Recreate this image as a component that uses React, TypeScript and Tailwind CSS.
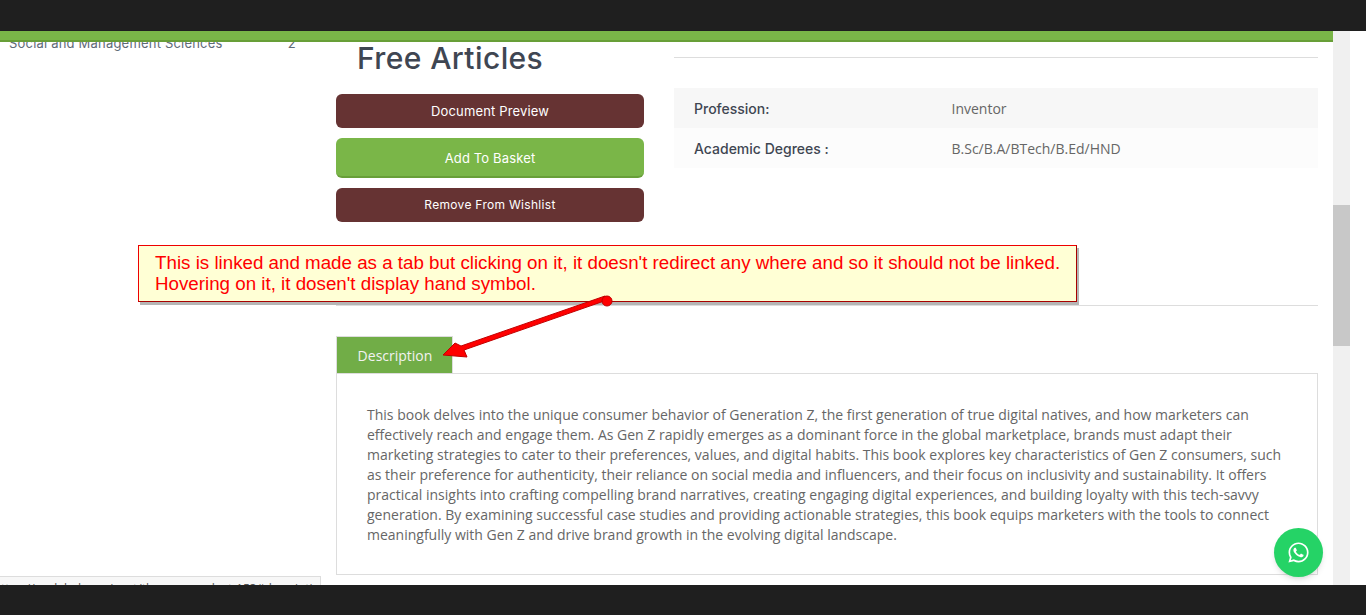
import { FaWhatsapp } from "react-icons/fa";

const sans = "font-['Open_Sans','Noto_Sans',sans-serif]";
const work = "font-['Inter','Liberation_Sans',sans-serif]";

export default function App() {
  return (
    <div className="relative flex h-[615px] w-[1366px] flex-col overflow-hidden bg-white">
      {/* browser chrome */}
      <div className="h-[31px] shrink-0 bg-[#1f1f1f]" />

      <div className="relative flex h-[554px] shrink-0">
        <div className="relative w-[1333px] shrink-0 overflow-hidden">
          <div className="relative z-10 h-[11px] border-b-2 border-[#689f38] bg-[#7ab648]" />

          <div className="flex">
            {/* sidebar */}
            <aside className="w-[336px] shrink-0 pl-[9px] pr-[40px]">
              <div className={`-mt-[9px] flex justify-between text-[13px] leading-[20px] tracking-[0.2px] text-[#5f6b78] ${work}`}>
                <span>Social and Management Sciences</span>
                <span>2</span>
              </div>
            </aside>

            {/* product */}
            <main className="w-[982px] shrink-0">
              <div className="flex gap-[30px]">
                <div className="w-[308px] shrink-0">
                  <h1 className={`pl-[21px] text-[30px] font-medium leading-[32px] tracking-[0.4px] text-[#3f4652] ${work}`}>Free Articles</h1>
                  <div className={`mt-[20px] flex flex-col gap-[10px] text-[13px] text-white ${work}`}>
                    <button className="h-[34px] rounded-[6px] bg-[#663333] pt-[2px] tracking-[0.15px]">Document Preview</button>
                    <button className="h-[40px] rounded-[6px] border-b-2 border-[#689f38] bg-[#7ab648] pt-[3px] tracking-[0.15px]">Add To Basket</button>
                    <button className="h-[34px] rounded-[6px] bg-[#663333] text-[12px] tracking-[0.3px]">Remove From Wishlist</button>
                  </div>
                </div>

                <div className="flex-1">
                  <div className="mt-[15px] border-t border-[#dddddd]" />
                  <div className={`mt-[30px] text-[14px] ${work}`}>
                    <div className="flex h-[40px] items-center bg-[#f7f7f7] pl-[20px]">
                      <span className="w-[257.5px] font-medium text-[#3f4652]">Profession:</span>
                      <span className={`text-[#666666] ${sans}`}>Inventor</span>
                    </div>
                    <div className="flex h-[40px] items-center bg-[#fcfcfc] pl-[20px]">
                      <span className="w-[257.5px] font-medium text-[#3f4652]">Academic Degrees :</span>
                      <span className={`text-[#666666] ${sans}`}>B.Sc/B.A/BTech/B.Ed/HND</span>
                    </div>
                  </div>
                </div>
              </div>

              <div className="mt-[83px] border-t border-[#dddddd]" />

              <div className={`mt-[30px] ${sans}`}>
                <div className="flex h-[37px] w-[117px] items-center justify-center border border-b-0 border-[#dddddd] bg-[#71ad47] pl-[1px] text-[14px] text-[#f2f2f2]">
                  Description
                </div>
                <div className="h-[202px] border border-[#dddddd] px-[30px] pt-[31px] text-[14px] leading-[20px] text-[#666666]">
                  This book delves into the unique consumer behavior of Generation Z, the first generation of true digital natives, and how marketers can effectively reach and engage them. As Gen Z rapidly emerges as a dominant force in the global marketplace, brands must adapt their marketing strategies to cater to their preferences, values, and digital habits. This book explores key characteristics of Gen Z consumers, such as their preference for authenticity, their reliance on social media and influencers, and their focus on inclusivity and sustainability. It offers practical insights into crafting compelling brand narratives, creating engaging digital experiences, and building loyalty with this tech-savvy generation. By examining successful case studies and providing actionable strategies, this book equips marketers with the tools to connect meaningfully with Gen Z and drive brand growth in the evolving digital landscape.
                </div>
              </div>
            </main>
          </div>

          {/* link status bubble */}
          <div className={`absolute bottom-0 left-0 h-[9px] w-[321px] overflow-hidden border-r border-t border-[#dddddd] bg-[#f7f7f7] pl-[1px] pt-[5px] text-[12px] leading-[14px] text-[#555555] ${sans}`}>
            <span className="block whitespace-nowrap">ttps://usalalad.com/post/the-con-product-153#description</span>
          </div>

          {/* whatsapp */}
          <div className="absolute left-[1274px] top-[497px] flex h-[49px] w-[49px] items-center justify-center rounded-full bg-[#25d366] text-white shadow-md">
            <FaWhatsapp className="h-[23px] w-[23px]" />
          </div>
        </div>

        {/* scrollbar */}
        <div className="w-[17px] shrink-0 bg-[#f0f0f0] pt-[174px]">
          <div className="h-[141px] bg-[#c8c8c8]" />
        </div>
      </div>

      <div className="h-[30px] shrink-0 bg-[#1f1f1f]" />

      {/* annotation callout */}
      <div className="absolute left-[138px] top-[245px] h-[57px] w-[939px] border border-[#ee0000] border-b-[#a80000] border-r-[#a80000] bg-[#ffffd5] pl-[16px] pt-[6px] font-['Liberation_Sans',Arial,sans-serif] text-[18.75px] leading-[21px] text-[#ff0000] shadow-[2px_3px_0_#b5b5b5]">
        This is linked and made as a tab but clicking on it, it doesn't redirect any where and so it should not be linked.
        <br />
        Hovering on it, it dosen't display hand symbol.
      </div>

      {/* annotation arrow */}
      <svg className="absolute left-0 top-0" width="1366" height="615">
        <path d="M607 300 L464 350 L467 357 L443 355 L455 343 L461 346 L605 296 Z" fill="#ff0000" stroke="#c00000" strokeWidth="1" />
        <circle cx="607" cy="301" r="5" fill="#ff0000" stroke="#c00000" />
      </svg>
    </div>
  );
}
